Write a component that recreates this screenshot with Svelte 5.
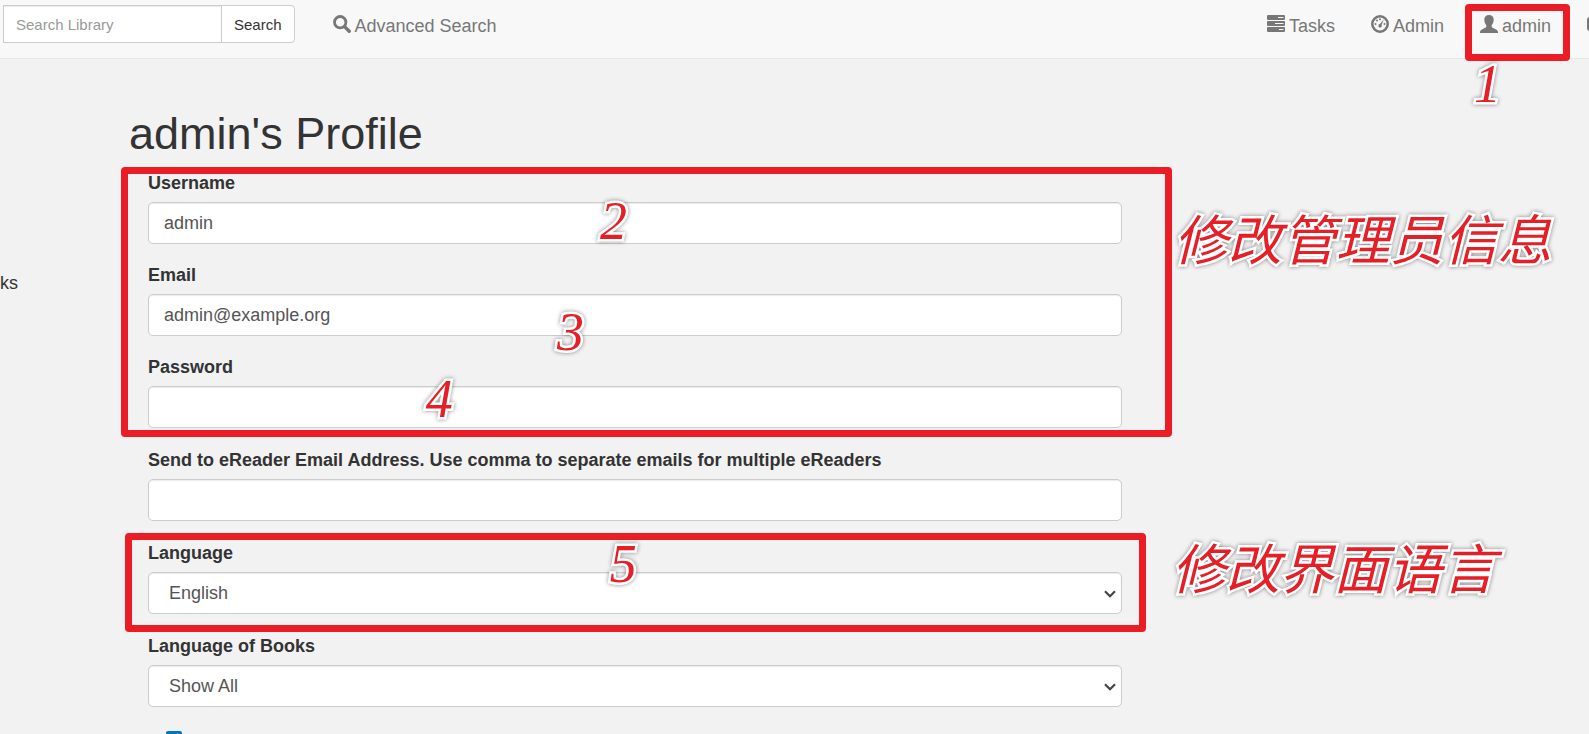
<script lang="ts">
    let username = $state("admin");
    let email = $state("admin@example.org");
    let password = $state("");
    let ereaderMail = $state("");
    let language = $state("en");
    let bookLanguage = $state("all");
    let showRandom = $state(true);
    let query = $state("");
</script>

{#snippet chevron()}
    <svg class="chevron" viewBox="0 0 12 8" aria-hidden="true">
        <path d="M1 1.200l5 5 5-5" fill="none" stroke="currentColor" stroke-width="2.200" />
    </svg>
{/snippet}

<div class="page">
    <header class="navbar">
        <form class="search" role="search">
            <input
                type="text"
                placeholder="Search Library"
                aria-label="Search Library"
                bind:value={query}
            />
            <button type="button">Search</button>
        </form>
        <a class="nav-link" href="#advanced">
            <svg class="icon" viewBox="0 0 18 18" aria-hidden="true">
                <circle cx="7.200" cy="7.200" r="5.700" fill="none" stroke="currentColor" stroke-width="2.800" />
                <path d="M11.600 11.600L16.200 16.200" stroke="currentColor" stroke-width="3.400" stroke-linecap="round" />
            </svg>
            Advanced Search
        </a>
        <nav class="nav-right">
            <a class="nav-link" href="#tasks">
                <svg class="icon" viewBox="0 0 18 18" aria-hidden="true">
                    <path
                        fill="currentColor"
                        fill-rule="evenodd"
                        d="M1 0h16a1 1 0 0 1 1 1v3a1 1 0 0 1-1 1H1a1 1 0 0 1-1-1V1a1 1 0 0 1 1-1zM11 2v1h5.500V2zM1 6h16a1 1 0 0 1 1 1v3a1 1 0 0 1-1 1H1a1 1 0 0 1-1-1V7a1 1 0 0 1 1-1zM8 8v1h8.500V8zM1 12h16a1 1 0 0 1 1 1v3a1 1 0 0 1-1 1H1a1 1 0 0 1-1-1v-3a1 1 0 0 1 1-1zM12 14v1h4.500v-1z"
                    />
                </svg>
                Tasks
            </a>
            <a class="nav-link" href="#admin">
                <svg class="icon" viewBox="0 0 18 18" aria-hidden="true">
                    <circle cx="9" cy="9" r="7.700" fill="none" stroke="currentColor" stroke-width="2.500" />
                    <g fill="currentColor">
                        <circle cx="4.500" cy="9" r="1" />
                        <circle cx="6" cy="5.600" r="1" />
                        <circle cx="9" cy="4.300" r="1" />
                        <circle cx="13.500" cy="9" r="1" />
                        <path d="M12.800 4.300L10.600 10a1.700 1.700 0 1 1-1.600-.9z" />
                    </g>
                </svg>
                Admin
            </a>
            <a class="nav-link marked" href="#profile">
                <svg class="icon" viewBox="0 0 18 18" aria-hidden="true">
                    <path
                        fill="currentColor"
                        d="M9 0c2.900 0 4.700 1.700 4.700 4.600 0 2.300-.8 4.300-2 5.600v1.500c0 .6 1 1.100 2.400 1.900 2.200 1.100 3.900 1.800 3.900 3.500V18H0v-.9c0-1.700 1.700-2.400 3.900-3.500 1.400-.8 2.400-1.300 2.400-1.900v-1.500c-1.200-1.300-2-3.300-2-5.600C4.300 1.700 6.100 0 9 0z"
                    />
                </svg>
                admin
                <span class="mark-box"></span>
                <span class="mark step step-1">1</span>
            </a>
            <a class="nav-link logout" href="#logout" aria-label="Logout">
                <svg class="icon" viewBox="0 0 18 18" aria-hidden="true">
                    <path
                        fill="none"
                        stroke="currentColor"
                        stroke-width="2"
                        d="M11 3H3a2 2 0 0 0-2 2v8a2 2 0 0 0 2 2h8M6 9h10M12 5l4 4-4 4"
                    />
                </svg>
            </a>
        </nav>
    </header>

    <div class="content">
        <aside><a href="#books">ks</a></aside>
        <main>
            <h1>admin's Profile</h1>
            <form class="profile">
                <section class="fields">
                    <div class="field">
                        <label for="name">Username</label>
                        <input id="name" type="text" bind:value={username} />
                    </div>
                    <div class="field">
                        <label for="email">Email</label>
                        <input id="email" type="email" bind:value={email} />
                    </div>
                    <div class="field">
                        <label for="password">Password</label>
                        <input id="password" type="password" bind:value={password} />
                    </div>
                    <span class="mark-box"></span>
                    <span class="mark step step-2">2</span>
                    <span class="mark step step-3">3</span>
                    <span class="mark step step-4">4</span>
                    <span class="mark note note-account">修改管理员信息</span>
                </section>
                <section class="fields">
                    <div class="field">
                        <label for="ereader">
                            Send to eReader Email Address. Use comma to separate emails for multiple eReaders
                        </label>
                        <input id="ereader" type="text" bind:value={ereaderMail} />
                    </div>
                </section>
                <section class="fields language">
                    <div class="field">
                        <label for="locale">Language</label>
                        <div class="select">
                            <select id="locale" bind:value={language}>
                                <option value="en">English</option>
                            </select>
                            {@render chevron()}
                        </div>
                    </div>
                    <span class="mark-box"></span>
                    <span class="mark step step-5">5</span>
                    <span class="mark note note-language">修改界面语言</span>
                </section>
                <div class="field">
                    <label for="book-language">Language of Books</label>
                    <div class="select">
                        <select id="book-language" bind:value={bookLanguage}>
                            <option value="all">Show All</option>
                        </select>
                        {@render chevron()}
                    </div>
                </div>
                <input
                    class="check"
                    type="checkbox"
                    aria-label="Show Random Books"
                    bind:checked={showRandom}
                />
            </form>
        </main>
    </div>
</div>

<style>
    :global(body) {
        background: #f2f2f3;
    }

    .page {
        height: 100vh;
        overflow: hidden;
        color: #333;
        font-family: "Liberation Sans", Arial, sans-serif;
        font-size: 18px;
        line-height: 25px;
    }

    .page * {
        box-sizing: border-box;
    }

    a {
        color: #333;
        text-decoration: none;
    }

    .navbar {
        display: flex;
        align-items: flex-start;
        padding: 5px 0 15px 3px;
        background: #f8f8f8;
        border-bottom: 1px solid #e7e7e7;
    }

    .search {
        display: flex;
        margin-right: 38px;
    }

    .search input,
    .search button {
        height: 38px;
        border: 1px solid #ccc;
        background: #fff;
        font-family: inherit;
        font-size: 15px;
    }

    .search input {
        width: 219px;
        padding: 0 12px;
        box-shadow: inset 0 1px 1px rgba(0, 0, 0, 0.08);
    }

    .search input::placeholder {
        color: #999;
    }

    .search button {
        margin-left: -1px;
        padding: 0 12px;
        border-radius: 0 4px 4px 0;
        color: #333;
    }

    .nav-link {
        position: relative;
        display: flex;
        gap: 4px;
        padding-top: 9px;
        color: #777;
        white-space: nowrap;
    }

    .icon {
        flex: none;
        width: 18px;
        height: 18px;
        margin-top: 1px;
    }

    .nav-right {
        display: flex;
        gap: 36px;
        margin-left: auto;
    }

    /* the logout link runs past the right edge */
    .logout {
        margin-right: -16px;
    }

    .content {
        display: flex;
    }

    aside {
        flex: none;
        width: 129px;
        padding-top: 212px;
    }

    main {
        flex: 1;
        padding-top: 49px;
    }

    h1 {
        margin: 0 0 11px;
        font-size: 45px;
        font-weight: 400;
        line-height: 52px;
    }

    .profile {
        width: 68%;
        padding-left: 19px;
    }

    .fields {
        position: relative;
        margin-bottom: 20px;
    }

    .field {
        display: flex;
        flex-direction: column;
        gap: 6px;
        margin-bottom: 19px;
    }

    .field:nth-last-child(1 of .field) {
        margin-bottom: 0;
    }

    label {
        font-weight: 700;
    }

    .field input,
    .field select {
        width: 100%;
        height: 42px;
        padding: 0 15px;
        border: 1px solid #ccc;
        border-radius: 5px;
        background: #fff;
        box-shadow: inset 0 1px 1px rgba(0, 0, 0, 0.08);
        color: #555;
        font-family: inherit;
        font-size: 18px;
    }

    .select {
        position: relative;
        display: flex;
    }

    .field select {
        padding: 0 30px 0 20px;
        appearance: none;
    }

    .chevron {
        position: absolute;
        top: 18px;
        right: 6px;
        width: 12px;
        height: 8px;
        color: #444;
        pointer-events: none;
    }

    .check {
        display: block;
        width: 16px;
        height: 16px;
        margin: 24px 0 0 18px;
        accent-color: #0075c8;
    }

    /* red tutorial marks */
    .mark-box {
        position: absolute;
        inset: -4px -50px -9px -27px;
        border: 7px solid #eb1c24;
        border-radius: 4px;
        pointer-events: none;
    }

    .marked .mark-box {
        inset: -1px -19px -22px -15px;
    }

    .language .mark-box {
        inset: -8px -24px -18px -23px;
    }

    .mark {
        position: absolute;
        color: #e61e26;
        -webkit-text-stroke: 5px #fff;
        paint-order: stroke fill;
        filter: drop-shadow(0 0 2px rgba(0, 0, 0, 0.45));
        font-style: italic;
        line-height: 54px;
        white-space: nowrap;
        pointer-events: none;
    }

    .step {
        font-family: "Liberation Serif", "Times New Roman", serif;
        font-size: 54px;
        font-weight: 400;
    }

    .note {
        left: 100%;
        font-family: "Noto Sans CJK SC", sans-serif;
        font-size: 54px;
        font-weight: 400;
    }

    .step-1 {
        top: 52px;
        left: -6px;
    }

    .step-2 {
        top: 23px;
        left: calc(46% + 4px);
    }

    .step-3 {
        top: 134px;
        left: 42%;
    }

    .step-4 {
        top: 201px;
        left: calc(28% + 5px);
    }

    .step-5 {
        top: -4px;
        left: calc(47% + 4px);
    }

    .note-account {
        top: 39px;
        margin-left: 52px;
    }

    .note-language {
        top: -2px;
        margin-left: 50px;
    }
</style>
